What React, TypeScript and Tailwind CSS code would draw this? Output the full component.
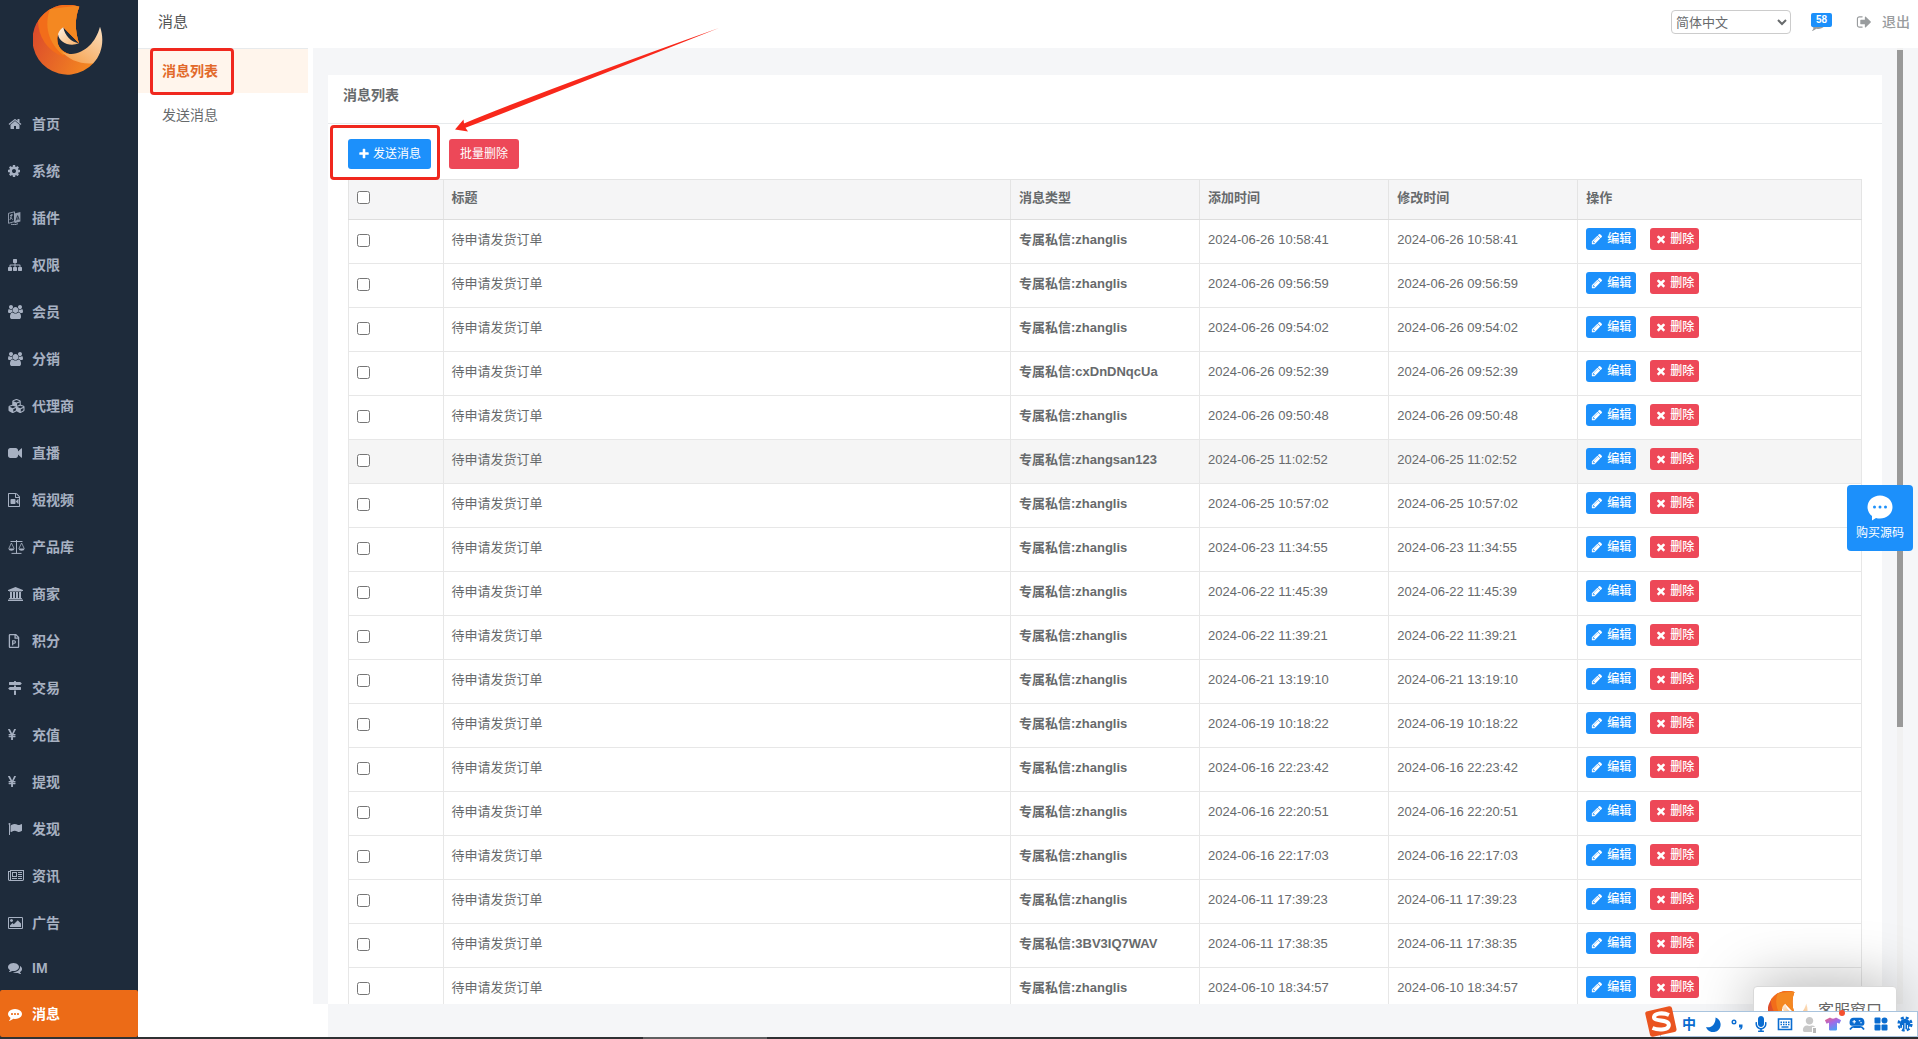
import type { ReactNode } from 'react';
import { FaCubes, FaRegFilePowerpoint, FaMicrophone, FaTshirt, FaUser } from 'react-icons/fa';

type IconProps = { box: string; d: string; className: string };

function Glyph({ box, d, className }: IconProps) {
  return (
    <svg viewBox={box} className={`fill-current ${className}`} aria-hidden="true">
      <path d={d} />
    </svg>
  );
}

const paths = {
  home: 'M1472 992v480q0 26-19 45t-45 19h-384v-384h-256v384h-384q-26 0-45-19t-19-45v-480q0-1 .5-3t.5-3l575-474 575 474q1 2 1 6zm223-69l-62 74q-8 9-21 11h-3q-13 0-21-7l-692-577-692 577q-12 8-24 7-13-2-21-11l-62-74q-8-10-7-23.5t11-21.5l719-599q32-26 76-26t76 26l244 204v-195q0-14 9-23t23-9h192q14 0 23 9t9 23v408l219 182q10 8 11 21.5t-7 23.5z',
  cog: 'M1152 896q0-106-75-181t-181-75-181 75-75 181 75 181 181 75 181-75 75-181zm512-109v222q0 12-8 23t-20 13l-185 28q-19 54-39 91 35 50 107 138 10 12 10 25t-9 23q-27 37-99 108t-94 71q-12 0-26-9l-138-108q-44 23-91 38-16 136-29 186-7 28-36 28h-222q-14 0-24.5-8.5t-11.5-21.5l-28-184q-49-16-90-37l-141 107q-10 9-25 9-14 0-25-11-126-114-165-168-7-10-7-23 0-12 8-23 15-21 51-66.5t54-70.5q-27-50-41-99l-183-27q-13-2-21-12.5t-8-23.5v-222q0-12 8-23t19-13l186-28q14-46 39-92-40-57-107-138-10-12-10-24 0-10 9-23 26-36 98.5-107.5t94.5-71.5q13 0 26 10l138 107q44-23 91-38 16-136 29-186 7-28 36-28h222q14 0 24.5 8.5t11.5 21.5l28 184q49 16 90 37l142-107q9-9 24-9 13 0 25 10 129 119 165 170 7 8 7 22 0 12-8 23-15 21-51 66.5t-54 70.5q26 50 41 98l183 28q13 2 21 12.5t8 23.5z',
  sitemap: 'M1792 1248v320q0 40-28 68t-68 28h-320q-40 0-68-28t-28-68v-320q0-40 28-68t68-28h96v-192h-512v192h96q40 0 68 28t28 68v320q0 40-28 68t-68 28h-320q-40 0-68-28t-28-68v-320q0-40 28-68t68-28h96v-192h-512v192h96q40 0 68 28t28 68v320q0 40-28 68t-68 28h-320q-40 0-68-28t-28-68v-320q0-40 28-68t68-28h96v-192q0-52 38-90t90-38h512v-192h-96q-40 0-68-28t-28-68v-320q0-40 28-68t68-28h320q40 0 68 28t28 68v320q0 40-28 68t-68 28h-96v192h512q52 0 90 38t38 90v192h96q40 0 68 28t28 68z',
  users: 'M593 896q-162 5-265 128h-134q-82 0-138-40.5t-56-118.5q0-353 124-353 6 0 43.5 21t97.5 42.5 119 21.5q67 0 133-23-5 37-5 66 0 139 81 256zm1071 637q0 120-73 189.5t-194 69.5h-874q-121 0-194-69.5t-73-189.5q0-53 3.5-103.5t14-109 26.5-108.5 43-97.5 62-81 85.5-53.5 111.5-20q10 0 43 21.5t73 48 107 48 135 21.5 135-21.5 107-48 73-48 43-21.5q61 0 111.5 20t85.5 53.5 62 81 43 97.5 26.5 108.5 14 109 3.5 103.5zm-1024-1277q0 106-75 181t-181 75-181-75-75-181 75-181 181-75 181 75 75 181zm704 384q0 159-112.5 271.5t-271.5 112.5-271.5-112.5-112.5-271.5 112.5-271.5 271.5-112.5 271.5 112.5 112.5 271.5zm576 225q0 78-56 118.5t-138 40.5h-134q-103-123-265-128 81-117 81-256 0-29-5-66 66 23 133 23 59 0 119-21.5t97.5-42.5 43.5-21q124 0 124 353zm-128-609q0 106-75 181t-181 75-181-75-75-181 75-181 181-75 181 75 75 181z',
  video: 'M1792 352v1088q0 42-39 59-13 5-25 5-27 0-45-19l-403-403v166q0 119-84.5 203.5t-203.5 84.5h-704q-119 0-203.5-84.5t-84.5-203.5v-704q0-119 84.5-203.5t203.5-84.5h704q119 0 203.5 84.5t84.5 203.5v165l403-402q18-19 45-19 12 0 25 5 39 17 39 59z',
  fileVideo: 'M1596 380q28 28 48 76t20 88v1152q0 40-28 68t-68 28h-1344q-40 0-68-28t-28-68v-1600q0-40 28-68t68-28h896q40 0 88 20t76 48zm-444-244v376h376q-10-29-22-41l-313-313q-12-12-41-22zm384 1528v-1024h-416q-40 0-68-28t-28-68v-416h-768v1536h1280zm-576-896q52 0 90 38t38 90v384q0 52-38 90t-90 38h-384q-52 0-90-38t-38-90v-384q0-52 38-90t90-38h384zm492 2q20 8 20 30v576q0 22-20 30-8 2-12 2-14 0-23-9l-265-266v-90l265-266q9-9 23-9 4 0 12 2z',
  bank: 'M960 0l960 384v128h-128q0 26-20.5 45t-48.5 19h-1526q-28 0-48.5-19t-20.5-45h-128v-128zm-704 640h256v768h128v-768h256v768h128v-768h256v768h128v-768h256v768h59q28 0 48.5 19t20.5 45v64h-1664v-64q0-26 20.5-45t48.5-19h59v-768zm1595 960q28 0 48.5 19t20.5 45v128h-1920v-128q0-26 20.5-45t48.5-19h1782z',
  signs: 'M1745 297q10 10 10 23t-10 23l-141 141q-28 28-68 28h-1344q-26 0-45-19t-19-45v-256q0-26 19-45t45-19h576v-64q0-26 19-45t45-19h128q26 0 45 19t19 45v64h512q40 0 68 28zm-977 919h256v512q0 26-19 45t-45 19h-128q-26 0-45-19t-19-45v-512zm832-448q26 0 45 19t19 45v256q0 26-19 45t-45 19h-1344q-40 0-68-28l-141-141q-10-10-10-23t10-23l141-141q28-28 68-28h512v-192h256v192h576z',
  yen: 'M985.5 1536h-172q-13 0-22.5-9t-9.5-23v-330h-288q-13 0-22.5-9t-9.5-23v-103q0-13 9.5-22.5t22.5-9.5h288v-85h-288q-13 0-22.5-9t-9.5-23v-104q0-13 9.5-22.5t22.5-9.5h214l-321-578q-8-16 0-32 10-16 28-16h194q19 0 29 18l215 425q19 38 56 125 10-24 30.5-68t27.5-61l191-420q8-19 29-19h191q17 0 27 16 9 14 1 31l-313 579h215q13 0 22.5 9.5t9.5 22.5v104q0 14-9.5 23t-22.5 9h-290v85h290q13 0 22.5 9.5t9.5 22.5v103q0 14-9.5 23t-22.5 9h-290v330q0 13-9.5 22.5t-22.5 9.5z',
  flag: 'M320 256q0 72-64 110v1266q0 13-9.5 22.5t-22.5 9.5h-64q-13 0-22.5-9.5t-9.5-22.5v-1266q-64-38-64-110 0-53 37.5-90.5t90.5-37.5 90.5 37.5 37.5 90.5zm1472 64v763q0 25-12.5 38.5t-39.5 27.5q-215 116-369 116-61 0-123.5-22t-108.5-48-115.5-48-142.5-22q-192 0-464 146-17 9-33 9-26 0-45-19t-19-45v-742q0-32 31-55 21-14 79-43 236-120 421-120 107 0 200 29t219 88q38 19 88 19 54 0 117.5-21t110-47 88-47 54.5-21q26 0 45 19t19 45z',
  news: 'M1024 512h-384v384h384v-384zm128 640v128h-640v-128h640zm0-768v640h-640v-640h640zm640 768v128h-512v-128h512zm0-256v128h-512v-128h512zm0-256v128h-512v-128h512zm0-256v128h-512v-128h512zm-1536 960v-960h-128v960q0 26 19 45t45 19 45-19 19-45zm1664 0v-1088h-1536v1088q0 33-11 64h1483q26 0 45-19t19-45zm128-1216v1216q0 80-56 136t-136 56h-1664q-80 0-136-56t-56-136v-1088h256v-128h1792z',
  image: 'M576 576q0 80-56 136t-136 56-136-56-56-136 56-136 136-56 136 56 56 136zm1024 384v448h-1408v-192l320-320 160 160 512-512zm96-704h-1600q-13 0-22.5 9.5t-9.5 22.5v1216q0 13 9.5 22.5t22.5 9.5h1600q13 0 22.5-9.5t9.5-22.5v-1216q0-13-9.5-22.5t-22.5-9.5zm160 32v1216q0 66-47 113t-113 47h-1600q-66 0-113-47t-47-113v-1216q0-66 47-113t113-47h1600q66 0 113 47t47 113z',
  comments: 'M1408 768q0 139-94 257t-256.5 186.5-353.5 68.5q-86 0-176-16-124 88-278 128-36 9-86 16h-3q-11 0-20.5-8t-11.5-21q-1-3-1-6.5t.5-6.5 2-6l2.5-5 3.5-5.5 4-5 4.5-5 4-4.5q5-6 23-25t26-29.5 22.5-29 25-38.5 20.5-44q-124-72-195-177t-71-224q0-139 94-257t256.5-186.5 353.5-68.5 353.5 68.5 256.5 186.5 94 257zm384 256q0 120-71 224.5t-195 176.5q10 24 20.5 44t25 38.5 22.5 29 26 29.5 23 25q1 1 4 4.5t4.5 5 4 5 3.5 5.5l2.5 5 2 6 .5 6.5-1 6.5q-3 14-13 22t-22 7q-50-7-86-16-154-40-278-128-90 16-176 16-271 0-472-132 58 4 88 4 161 0 309-45t264-129q125-92 192-212t67-254q0-77-23-152 129 71 204 178t75 230z',
  commenting: 'M640 896q0-53-37.5-90.5t-90.5-37.5-90.5 37.5-37.5 90.5 37.5 90.5 90.5 37.5 90.5-37.5 37.5-90.5zm384 0q0-53-37.5-90.5t-90.5-37.5-90.5 37.5-37.5 90.5 37.5 90.5 90.5 37.5 90.5-37.5 37.5-90.5zm384 0q0-53-37.5-90.5t-90.5-37.5-90.5 37.5-37.5 90.5 37.5 90.5 90.5 37.5 90.5-37.5 37.5-90.5zm384 0q0 174-120 321.5t-326 233-450 85.5q-110 0-211-18-173 173-435 229-52 10-86 13-12 1-22-6t-13-18q-4-15 20-37 5-5 23.5-21.5t25.5-23.5 23.5-25.5 24-31.5 20.5-37 20-48 14.5-57.5 12.5-72.5q-146-90-229.5-216.5t-83.5-269.5q0-174 120-321.5t326-233 450-85.5 450 85.5 326 233 120 321.5z',
  pencil: 'M491 1536l91-91-235-235-91 91v107h128v128h107zm523-928q0-22-22-22-10 0-17 7l-542 542q-7 7-7 17 0 22 22 22 10 0 17-7l542-542q7-7 7-17zm-54-192l416 416-832 832h-416v-416zm683 96q0 53-37 90l-166 166-416-416 166-165q36-38 90-38 53 0 91 38l235 234q37 39 37 91z',
  times: 'M1490 1322q0 40-28 68l-136 136q-28 28-68 28t-68-28l-294-294-294 294q-28 28-68 28t-68-28l-136-136q-28-28-28-68t28-68l294-294-294-294q-28-28-28-68t28-68l136-136q28-28 68-28t68 28l294 294 294-294q28-28 68-28t68 28l136 136q28 28 28 68t-28 68l-294 294 294 294q28 28 28 68z',
  plus: 'M1600 736v192q0 40-28 68t-68 28h-416v416q0 40-28 68t-68 28h-192q-40 0-68-28t-28-68v-416h-416q-40 0-68-28t-28-68v-192q0-40 28-68t68-28h416v-416q0-40 28-68t68-28h192q40 0 68 28t28 68v416h416q40 0 68 28t28 68z',
  signOut: 'M704 1440q0 4 1 20t.5 26.5-3 23.5-10 19.5-20.5 6.5h-320q-119 0-203.5-84.5t-84.5-203.5v-704q0-119 84.5-203.5t203.5-84.5h320q13 0 22.5 9.5t9.5 22.5q0 4 1 20t.5 26.5-3 23.5-10 19.5-20.5 6.5h-320q-66 0-113 47t-47 113v704q0 66 47 113t113 47h312l11.5 1 11.5 3 8 5.5 7 9 2 13.5zm928-544q0 26-19 45l-544 544q-19 19-45 19t-45-19-19-45v-288h-448q-26 0-45-19t-19-45v-384q0-26 19-45t45-19h448v-288q0-26 19-45t45-19 45 19l544 544q19 19 19 45z',
};

function LanguageIcon() {
  return (
    <svg viewBox="0 0 13 14" className="h-3.5 w-[13px]" fill="none" stroke="currentColor" aria-hidden="true">
      <path d="M6.5 2.5 12.4.9v9.6l-5.9 1.7z" fill="currentColor" stroke="none" opacity=".85" />
      <path d="M.5 2.3 6.5.8v9.8l-6 1.7zM2 4.6l3-.8M3.4 3.2c0 2.5-.6 4.6-1.7 5.8M2.2 6l2.6 2.6" strokeWidth=".8" />
      <path d="m8 9.600 1.600-5 1.600 4M8.600 8h2" stroke="#1e2b3b" strokeWidth=".9" />
      <path d="M3 13.200c2 .7 4.5.6 7-.5" strokeWidth=".9" />
    </svg>
  );
}

function ScaleIcon() {
  return (
    <svg viewBox="0 0 17 14" className="h-3.5 w-[17px]" fill="none" stroke="currentColor" aria-hidden="true">
      <path d="M2.5 1.5h12M8.5 0v13.5M3.5 13.4h10" strokeWidth="1" />
      <path d="M.8 8.5 3.4 3l2.7 5.5M10.9 8.5 13.6 3l2.6 5.5" strokeWidth=".8" />
      <path d="M.3 8.5h6.2q-.4 2.300-3.100 2.300T.3 8.500zM10.500 8.500h6.200q-.4 2.300-3.100 2.300t-3.100-2.300z" fill="currentColor" stroke="none" />
    </svg>
  );
}

function FlameLogo({ className, id }: { className: string; id: string }) {
  return (
    <svg viewBox="0 0 70 70" className={className} aria-hidden="true">
      <defs>
        <linearGradient id={`${id}-base`} x1="0" y1="0.4" x2="0.9" y2="0.8">
          <stop offset="0" stopColor="#dc4c2b" />
          <stop offset="1" stopColor="#f58a20" />
        </linearGradient>
        <linearGradient id={`${id}-tail`} x1="1" y1="0" x2="0.2" y2="1">
          <stop offset="0" stopColor="#fbe0c2" />
          <stop offset="1" stopColor="#f6a04b" />
        </linearGradient>
        <linearGradient id={`${id}-core`} x1="0" y1="0" x2="1" y2="1">
          <stop offset="0" stopColor="#fff3e6" />
          <stop offset="1" stopColor="#f8b068" />
        </linearGradient>
        <clipPath id={`${id}-body`}>
          <path d="M46.300 1.700A35 35 0 1 0 60.300 58.300C52 52 43 49.500 37.500 49.200 28 48 23 40 24.500 31L30.300 22.300 46 38.300C42 26 41.500 13 46.300 1.700z" />
        </clipPath>
      </defs>
      <g clipPath={`url(#${id}-body)`}>
        <path d="M0 0h70v70H0z" fill={`url(#${id}-base)`} />
        <path d="M5 15C5 32 14 45 30 52L50 40V0H5z" fill="#f26d1a" />
        <path d="M17 4C11 20 15 38 30 50L50 40V0z" fill="#f48821" />
      </g>
      <path d="M67 21.700C71.500 34 69.500 49 60.300 58.300 48 59.500 35 55 28 45.500 31 48.500 34.500 49.300 38.500 49 52 48 63 37 67 21.700z" fill={`url(#${id}-tail)`} />
      <path d="M30.300 22.300C32 31 38 37 46 38.300 37 42 26 38 25 29 26 26 28 24 30.300 22.300z" fill={`url(#${id}-core)`} />
    </svg>
  );
}

const menu: { label: string; icon: ReactNode }[] = [
  { label: '首页', icon: <Glyph box="0 0 1792 1792" d={paths.home} className="h-3.5 w-3.5" /> },
  { label: '系统', icon: <Glyph box="128 0 1536 1792" d={paths.cog} className="h-3.5 w-3" /> },
  { label: '插件', icon: <LanguageIcon /> },
  { label: '权限', icon: <Glyph box="0 0 1792 1792" d={paths.sitemap} className="h-3.5 w-3.5" /> },
  { label: '会员', icon: <Glyph box="0 0 1920 1792" d={paths.users} className="h-3.5 w-[15px]" /> },
  { label: '分销', icon: <Glyph box="0 0 1920 1792" d={paths.users} className="h-3.5 w-[15px]" /> },
  { label: '代理商', icon: <FaCubes className="h-4 w-[17px]" /> },
  { label: '直播', icon: <Glyph box="0 0 1792 1792" d={paths.video} className="h-3.5 w-3.5" /> },
  { label: '短视频', icon: <Glyph box="128 0 1536 1792" d={paths.fileVideo} className="h-3.5 w-3" /> },
  { label: '产品库', icon: <ScaleIcon /> },
  { label: '商家', icon: <Glyph box="0 0 1920 1792" d={paths.bank} className="h-3.5 w-[15px]" /> },
  { label: '积分', icon: <FaRegFilePowerpoint className="h-3.5 w-3" /> },
  { label: '交易', icon: <Glyph box="0 0 1792 1792" d={paths.signs} className="h-3.5 w-3.5" /> },
  { label: '充值', icon: <Glyph box="382 0 1024 1792" d={paths.yen} className="h-3.5 w-2" /> },
  { label: '提现', icon: <Glyph box="382 0 1024 1792" d={paths.yen} className="h-3.5 w-2" /> },
  { label: '发现', icon: <Glyph box="0 0 1792 1792" d={paths.flag} className="h-3.5 w-3.5" /> },
  { label: '资讯', icon: <Glyph box="0 0 2048 1792" d={paths.news} className="h-3.5 w-4" /> },
  { label: '广告', icon: <Glyph box="-64 0 1920 1792" d={paths.image} className="h-3.5 w-[15px]" /> },
  { label: 'IM', icon: <Glyph box="0 0 1792 1792" d={paths.comments} className="h-3.5 w-3.5" /> },
  { label: '消息', icon: <Glyph box="0 0 1792 1792" d={paths.commenting} className="h-3.5 w-3.5" /> },
];

const messages = [
  { user: 'zhanglis', time: '2024-06-26 10:58:41' },
  { user: 'zhanglis', time: '2024-06-26 09:56:59' },
  { user: 'zhanglis', time: '2024-06-26 09:54:02' },
  { user: 'cxDnDNqcUa', time: '2024-06-26 09:52:39' },
  { user: 'zhanglis', time: '2024-06-26 09:50:48' },
  { user: 'zhangsan123', time: '2024-06-25 11:02:52' },
  { user: 'zhanglis', time: '2024-06-25 10:57:02' },
  { user: 'zhanglis', time: '2024-06-23 11:34:55' },
  { user: 'zhanglis', time: '2024-06-22 11:45:39' },
  { user: 'zhanglis', time: '2024-06-22 11:39:21' },
  { user: 'zhanglis', time: '2024-06-21 13:19:10' },
  { user: 'zhanglis', time: '2024-06-19 10:18:22' },
  { user: 'zhanglis', time: '2024-06-16 22:23:42' },
  { user: 'zhanglis', time: '2024-06-16 22:20:51' },
  { user: 'zhanglis', time: '2024-06-16 22:17:03' },
  { user: 'zhanglis', time: '2024-06-11 17:39:23' },
  { user: '3BV3IQ7WAV', time: '2024-06-11 17:38:35' },
  { user: 'zhanglis', time: '2024-06-10 18:34:57' },
];

function Sidebar() {
  return (
    <aside className="w-[138px] shrink-0 bg-[#1e2b3b]">
      <div className="flex h-[100px] items-start pl-[33px] pt-[5px]">
        <FlameLogo className="size-[70px]" id="brand" />
      </div>
      <nav>
        {menu.map((item) => (
          <a
            key={item.label}
            href="#"
            className={`flex items-center pl-2 text-sm font-bold ${item.label === 'IM' ? 'h-11' : 'h-[47px]'} ${
              item.label === '消息' ? 'rounded-xs bg-[#ec6b17] text-white' : 'text-[#a7b1c2]'
            }`}
          >
            <span className="flex w-6 shrink-0 items-center">{item.icon}</span>
            {item.label}
          </a>
        ))}
      </nav>
    </aside>
  );
}

function TopBar() {
  return (
    <header className="flex h-12 shrink-0 items-center bg-white pr-2 pl-5 pb-1">
      <h1 className="text-[15px] text-[#555]">消息</h1>
      <div className="ml-auto flex items-center text-sm text-[#999c9e]">
        <select aria-label="语言" className="h-6 w-[120px] rounded-sm border border-[#ccc] bg-white text-[13px] text-[#676a6c]">
          <option>简体中文</option>
        </select>
        <a href="#" aria-label="消息 58" className="relative ml-5 block h-[18px] w-[21px]">
          <Glyph box="0 0 1792 1792" d={paths.commenting} className="absolute top-1 left-0 size-3.5" />
          <span className="absolute top-0 left-0 flex h-3.5 w-[21px] items-center justify-center rounded-xs bg-[#1c90fb] text-[10px] font-bold text-white">
            58
          </span>
        </a>
        <a href="#" className="ml-6 flex items-center gap-2.5 font-medium">
          <Glyph box="64 0 1600 1792" d={paths.signOut} className="h-4 w-4" />
          退出
        </a>
      </div>
    </header>
  );
}

function SubMenu() {
  return (
    <nav className="w-[175px] shrink-0 bg-white text-sm">
      <div className="mr-[5px] border-t border-[#e7eaec]">
        <a href="#" className="flex h-11 items-center bg-[#fff5ec] pl-6 font-bold text-[#e2692a]">
          消息列表
        </a>
        <a href="#" className="flex h-11 items-center pl-6 text-[#676a6c]">
          发送消息
        </a>
      </div>
    </nav>
  );
}

function MessageTable() {
  return (
    <table className="w-full table-fixed border-collapse text-[13px]">
      <colgroup>
        <col className="w-[6.25%]" />
        <col className="w-[37.5%]" />
        <col className="w-[12.5%]" />
        <col className="w-[12.5%]" />
        <col className="w-[12.5%]" />
        <col className="w-[18.75%]" />
      </colgroup>
      <thead className="bg-[#f5f5f6]">
        <tr className="h-10 text-left [&>th]:border [&>th]:border-[#e4e4e4] [&>th]:border-b-[#ddd] [&>th]:px-2 [&>th]:pb-1">
          <th>
            <input type="checkbox" aria-label="全选" className="block size-[13px]" />
          </th>
          <th>标题</th>
          <th>消息类型</th>
          <th>添加时间</th>
          <th>修改时间</th>
          <th>操作</th>
        </tr>
      </thead>
      <tbody>
        {messages.map((row, i) => (
          <tr
            key={row.time}
            className={`h-11 [&>td]:border [&>td]:border-[#e7e7e7] [&>td]:px-2 [&>td]:py-2 [&>td]:align-top [&>td]:leading-6 ${
              i === 5 ? 'bg-[#f5f5f5]' : 'bg-white'
            }`}
          >
            <td>
              <span className="flex h-6 items-center">
                <input type="checkbox" aria-label={`选择 ${row.time}`} className="size-[13px]" />
              </span>
            </td>
            <td>待申请发货订单</td>
            <td className="font-bold">专属私信:{row.user}</td>
            <td>{row.time}</td>
            <td>{row.time}</td>
            <td>
              <div className="flex gap-3.5 text-xs font-medium text-white">
                <button className="flex h-[22px] items-center gap-1 rounded-[3px] bg-[#1c90fb] px-[5px]">
                  <Glyph box="0 0 1792 1792" d={paths.pencil} className="size-3" />
                  编辑
                </button>
                <button className="flex h-[22px] items-center gap-[3px] rounded-[3px] bg-[#ed4858] px-[5px]">
                  <Glyph box="0 0 1792 1792" d={paths.times} className="size-3" />
                  删除
                </button>
              </div>
            </td>
          </tr>
        ))}
      </tbody>
    </table>
  );
}

function Content() {
  return (
    <main className="flex min-w-0 flex-1 flex-col">
      <div className="flex min-h-0 flex-1 overflow-hidden bg-[#f5f6f8] pl-[15px]">
        <div className="min-w-0 flex-1 pt-[27px] pr-[15px]">
          <section className="bg-white">
            <h2 className="flex h-[49px] items-center border-b border-[#e7eaec] px-[15px] pb-2 text-sm font-semibold">
              消息列表
            </h2>
            <div className="px-5 pt-[15px]">
              <div className="mb-2.5 flex gap-[18px] text-xs text-white">
                <button className="flex h-[30px] items-center gap-[3px] rounded-[3px] bg-[#1c90fb] px-2.5">
                  <Glyph box="0 0 1792 1792" d={paths.plus} className="size-3" />
                  发送消息
                </button>
                <button className="h-[30px] rounded-[3px] bg-[#ed4858] px-[11px]">批量删除</button>
              </div>
              <MessageTable />
            </div>
          </section>
        </div>
        <div className="w-1.5 shrink-0 bg-[#f1f1f1] pt-0.5">
          <div className="h-[71%] bg-[#999]" />
        </div>
        <div className="w-[15px] shrink-0" />
      </div>
      <div className="flex h-[33px] shrink-0">
        <div className="w-[15px] bg-white" />
        <div className="flex-1 bg-[#f5f6f8]" />
      </div>
    </main>
  );
}

function Annotations() {
  return (
    <div className="pointer-events-none">
      <div className="absolute top-12 left-[150px] h-[47px] w-[84px] rounded-sm border-3 border-[#f0281e]" />
      <div className="absolute top-[125px] left-[330px] h-[55px] w-[110px] rounded-sm border-3 border-[#f0281e]" />
      <svg className="absolute top-7 left-[455px] h-[104px] w-[264px]" viewBox="0 0 264 104" aria-hidden="true">
        <path d="M0 101.500 8.500 91.500 9 95.500Q90 62 264 0 95 67 10.500 99.800L13 103.500z" fill="#f8281b" />
      </svg>
    </div>
  );
}

function BuyButton() {
  return (
    <button className="absolute top-[485px] right-[5px] flex size-[66px] flex-col items-center justify-center gap-1 rounded-sm bg-[#1c90fb] text-xs text-white">
      <svg viewBox="0 0 26 26" className="size-[26px]" aria-hidden="true">
        <path d="M13 .5c7 0 12.500 5 12.500 11.500S20 23.500 13 23.500c-1.500 0-2.700-.2-4-.6L5 25.500V21C2.200 18.900.5 15.700.5 12 .5 5.500 6 .5 13 .5z" fill="#fff" />
        <g fill="#1c90fb">
          <circle cx="7.500" cy="12" r="1.500" />
          <circle cx="13" cy="12" r="1.500" />
          <circle cx="18.500" cy="12" r="1.500" />
        </g>
      </svg>
      购买源码
    </button>
  );
}

function ServicePopup() {
  return (
    <div className="absolute right-[21px] bottom-0.5 flex h-[51px] w-[144px] items-start gap-2.5 overflow-hidden rounded-t-sm border border-[#d9d9d9] bg-white pt-1 pl-3.5 text-base text-[#666] shadow-[0_0_60px_rgba(0,0,0,0.35)]">
      <FlameLogo className="size-10 shrink-0" id="service" />
      <span className="pt-2 whitespace-nowrap">客服窗口</span>
    </div>
  );
}

function InputBar() {
  return (
    <div className="absolute right-0 bottom-0.5 flex h-[26px] w-[258px] items-center border border-[#a9c4de] bg-white pl-4 text-[#0a6cd0]">
      <svg viewBox="0 0 32 31" className="absolute -bottom-px -left-4 h-[31px] w-8" aria-hidden="true">
        <path d="M1.500 5.500 24 .2q2.500-.4 3 2L31.500 23q.4 2.500-2 3L8 30.800q-2.500.4-3-2L.3 8q-.4-2 1.200-2.500z" fill="#ea5420" />
        <path d="M24 9c-6-2.800-14.500-1.800-15 2C8.600 16 23 13 23.800 18.500c.6 5-9 6.500-16.300 3.500" fill="none" stroke="#fff" strokeWidth="4" />
      </svg>
      <ul className="flex text-sm [&>li]:flex [&>li]:w-6 [&>li]:items-center [&>li]:justify-center">
        <li className="font-bold">中</li>
        <li>
          <svg viewBox="0 0 16 16" className="size-4 fill-current" aria-hidden="true">
            <path d="M10.500 1.500A7.500 7.500 0 1 1 1 11c5 1.500 10-3 9.500-9.500z" />
          </svg>
        </li>
        <li>
          <svg viewBox="0 0 14 14" className="size-3.5" aria-hidden="true">
            <circle cx="4" cy="5" r="1.800" fill="none" stroke="currentColor" strokeWidth="1.400" />
            <path d="M9 7.500h3.500v2.500q-.3 2.500-2.800 3V12q1-.5 1-1.500H9z" fill="currentColor" />
          </svg>
        </li>
        <li>
          <FaMicrophone className="size-4" />
        </li>
        <li>
          <svg viewBox="0 0 16 14" className="h-3.5 w-4" aria-hidden="true">
            <path d="M1.500 2h13v10.500h-13z" fill="none" stroke="currentColor" strokeWidth="1.600" />
            <path d="M3.500 5.200h9M3.500 7.500h9" stroke="currentColor" strokeWidth="1.400" strokeDasharray="1.500 1" />
            <path d="M4.500 10h7" stroke="currentColor" strokeWidth="1.400" />
          </svg>
        </li>
        <li className="relative text-[#c8c8c8]">
          <FaUser className="size-[15px]" />
          <span className="absolute right-1 bottom-0 h-[7px] w-[5px] border border-white bg-[#b8b8b8]" />
        </li>
        <li className="relative">
          <svg width="0" height="0" className="absolute" aria-hidden="true">
            <linearGradient id="skin" x1="0" y1="0" x2="0.6" y2="1">
              <stop offset="0" stopColor="#f0607a" />
              <stop offset="0.5" stopColor="#a06be8" />
              <stop offset="1" stopColor="#4aa0f5" />
            </linearGradient>
          </svg>
          <FaTshirt className="size-4" fill="url(#skin)" />
          <span className="absolute -top-1 right-0 size-1.5 rounded-full bg-[#f5502e]" />
        </li>
        <li>
          <svg viewBox="0 0 16 14" className="h-3.5 w-4" aria-hidden="true">
            <path d="M4.500.8h7q3.500 0 3.900 4t-2.400 4H3Q.2 8.800.6 4.800T4.500.8z" fill="currentColor" />
            <path d="M3.500 4.800h3.400M5.200 3.100v3.400M9.800 3.800h1.500M11.300 5.800h1.500" stroke="#fff" strokeWidth="1.100" />
            <path d="M1 12.500q2-3 4-2.500h6q2-.5 4 2.500" fill="none" stroke="currentColor" strokeWidth="1.800" />
          </svg>
        </li>
        <li>
          <svg viewBox="0 0 14 14" className="size-3.5 fill-current" aria-hidden="true">
            <rect x="0.500" y="0.500" width="6" height="6" rx="1" />
            <rect x="7.500" y="0.500" width="6" height="6" rx="3" />
            <rect x="0.500" y="7.500" width="6" height="6" rx="1" />
            <rect x="7.500" y="7.500" width="6" height="6" rx="1" />
          </svg>
        </li>
        <li>
          <svg viewBox="0 0 16 16" className="size-4" aria-hidden="true">
            <circle cx="8" cy="8" r="5.200" fill="currentColor" />
            <circle cx="8" cy="8" r="6.300" fill="none" stroke="currentColor" strokeWidth="2.600" strokeDasharray="2.900 2.050" />
            <path d="M8 7v7M5.500 9v3.500M10.500 9v3.500" stroke="#fff" strokeWidth="0.900" />
          </svg>
        </li>
      </ul>
    </div>
  );
}

export default function App() {
  return (
    <div className="relative flex h-screen flex-col overflow-hidden bg-white font-['Liberation_Sans','Noto_Sans_CJK_SC',sans-serif] text-[#676a6c]">
      <div className="flex min-h-0 flex-1">
        <Sidebar />
        <div className="flex min-w-0 flex-1 flex-col">
          <TopBar />
          <div className="flex min-h-0 flex-1 overflow-hidden">
            <SubMenu />
            <Content />
          </div>
        </div>
      </div>
      <div className="flex h-0.5 shrink-0 bg-[#2f3133]">
        <div className="ml-[33.5%] w-[6.5%] bg-[#5f6061]" />
      </div>
      <BuyButton />
      <ServicePopup />
      <Annotations />
      <InputBar />
    </div>
  );
}
